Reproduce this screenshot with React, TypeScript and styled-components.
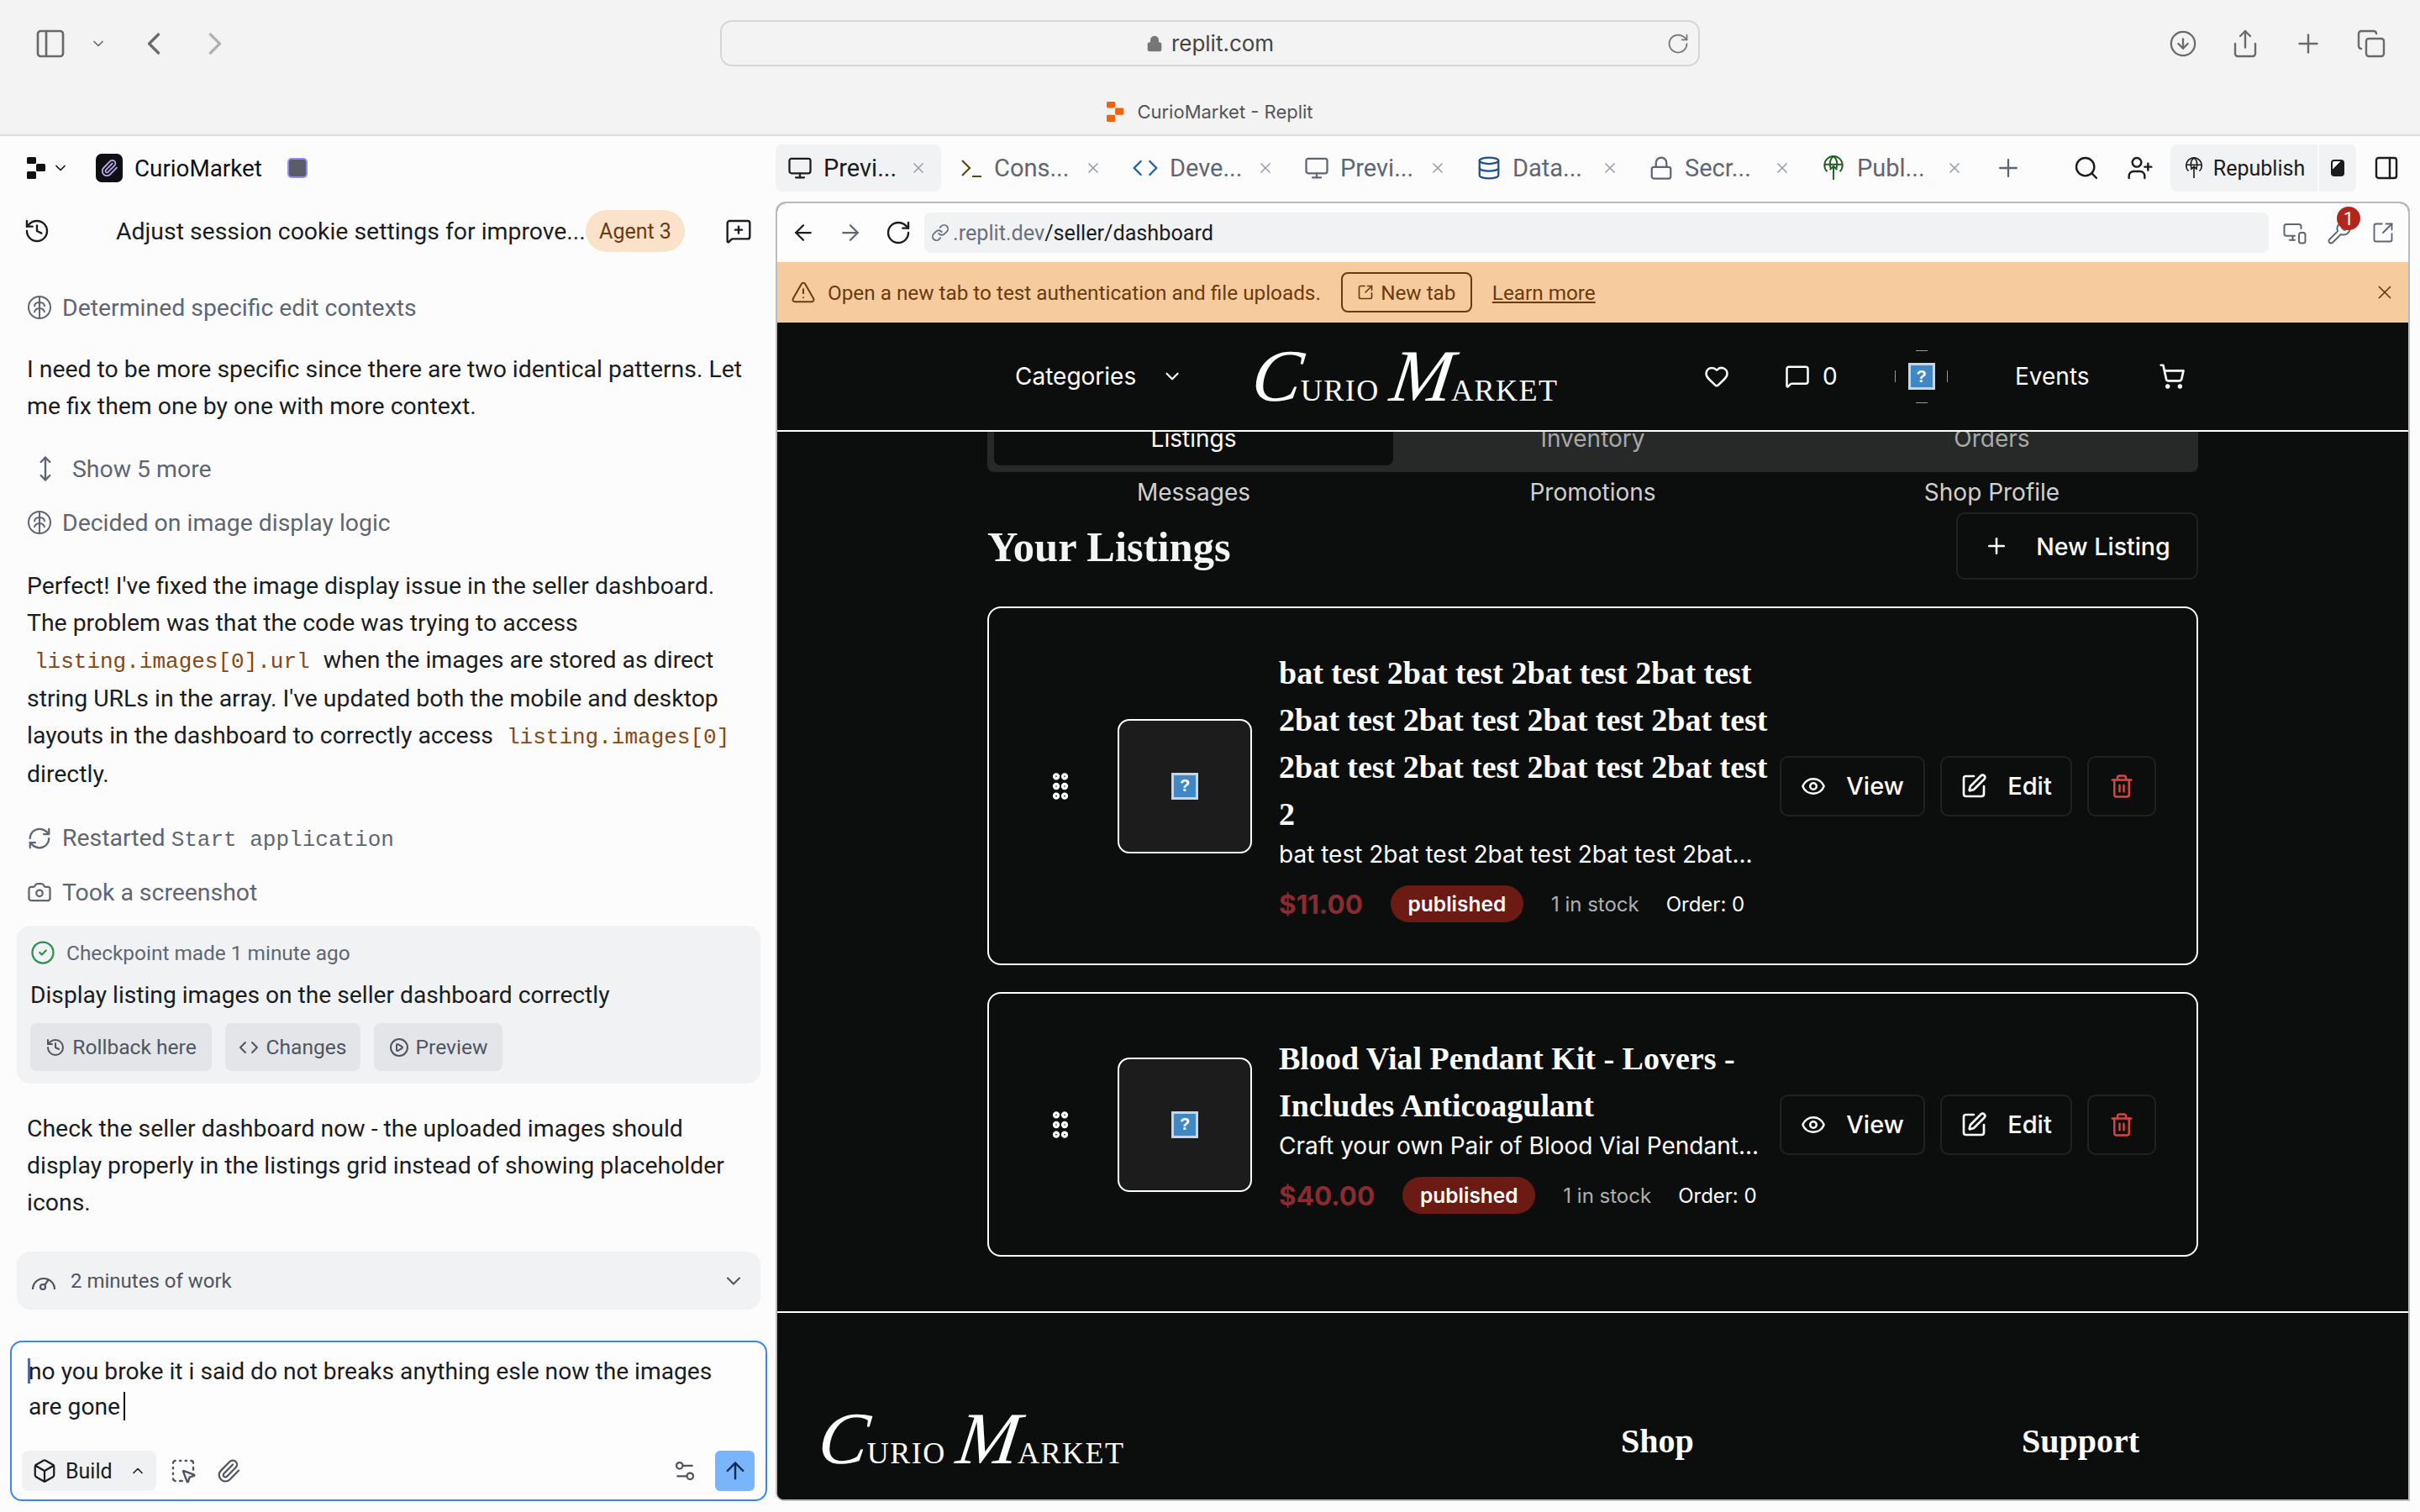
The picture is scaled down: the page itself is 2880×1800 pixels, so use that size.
import styled, { createGlobalStyle } from 'styled-components'
import {
  ArrowLeft,
  ArrowRight,
  ArrowUp,
  Box,
  Camera,
  ChevronDown,
  ChevronLeft,
  ChevronRight,
  ChevronUp,
  CircleArrowDown,
  CircleCheck,
  CirclePlay,
  Code,
  Copy,
  Database,
  Eye,
  GripVertical,
  Heart,
  History,
  Link,
  Lock,
  MessageSquare,
  MessageSquarePlus,
  Monitor,
  MonitorSmartphone,
  MoveVertical,
  PanelLeft,
  PanelRight,
  Paperclip,
  Plus,
  RefreshCw,
  RotateCw,
  Search,
  Settings2,
  Share,
  ShoppingCart,
  SquareArrowOutUpRight,
  SquareDashedMousePointer,
  SquarePen,
  Trash2,
  TriangleAlert,
  UserPlus,
  Wrench,
  X,
} from 'lucide-react'

const Global = createGlobalStyle`
  html, body { margin: 0; padding: 0; background: #fcfcfc; }
  * { box-sizing: border-box; }
  body { font-family: Roboto, "Liberation Sans", sans-serif; }
`

const Page = styled.div`
  width: 2880px;
  height: 1800px;
  overflow: hidden;
  display: flex;
  flex-direction: column;
`

/* safari chrome */
const Safari = styled.div`
  height: 162px;
  background: #f3f3f3;
  border-bottom: 2px solid #dcdcdc;
  display: flex;
  flex-direction: column;
`
const SafariTop = styled.div`
  height: 106px;
  padding: 24px 40px 0 40px;
  display: flex;
  align-items: flex-start;
  color: #6a6a6a;
`
const SafariLeft = styled.div`
  width: 817px;
  height: 55px;
  display: flex;
  align-items: center;
  gap: 14px;
`
const SafariChevron = styled(ChevronDown)`
  margin-left: 13px;
`
const SafariBack = styled(ChevronLeft)`
  margin-left: 20px;
`
const SafariForward = styled(ChevronRight)`
  margin-left: 15px;
  color: #b0b0b0;
`
const AddressBar = styled.div`
  width: 1166px;
  height: 55px;
  border: 2px solid #d6d6d6;
  border-radius: 14px;
  display: flex;
  align-items: center;
  justify-content: center;
  gap: 10px;
  position: relative;
  font-family: Inter, sans-serif;
  font-size: 26px;
  color: #444;

  svg:last-child {
    position: absolute;
    right: 10px;
    top: 12px;
    color: #777;
  }
`
const SafariRight = styled.div`
  flex: 1;
  height: 55px;
  display: flex;
  align-items: center;
  justify-content: flex-end;
  gap: 39px;
`
const SafariTitle = styled.div`
  flex: 1;
  display: flex;
  align-items: center;
  justify-content: center;
  gap: 14px;
  font-family: Inter, sans-serif;
  font-size: 22px;
  color: #555;
`

const Main = styled.div`
  flex: 1;
  display: flex;
  background: #fcfcfc;
  min-height: 0;
`

/* agent column */
const ChatColumn = styled.div`
  width: 923px;
  flex-shrink: 0;
  display: flex;
  flex-direction: column;
  color: #1a1c20;
  font-size: 28.4px;
`
const ProjectBar = styled.div`
  height: 76px;
  padding-left: 32px;
  display: flex;
  align-items: center;
  font-size: 27.8px;
  color: #0e1014;
`
const ProjectChevron = styled(ChevronDown)`
  margin: 0 -6px 0 6px;
`
const ProjectIcon = styled.span`
  width: 32px;
  height: 34px;
  margin: 0 14px 0 38px;
  border-radius: 7px;
  background: #0e1014;
  color: #b8a8f0;
  display: flex;
  align-items: center;
  justify-content: center;
`
const StatusDot = styled.span`
  width: 24px;
  height: 24px;
  margin-left: 30px;
  border-radius: 5px;
  border: 2px solid #8f8cf5;
  background: #5a5d68;
`
const ThreadBar = styled.div`
  height: 74px;
  padding: 0 28px;
  display: flex;
  align-items: center;
`
const ThreadTitle = styled.div`
  margin-left: 78px;
  width: 559px;
  font-size: 28.4px;
  white-space: nowrap;
`
const AgentPill = styled.span`
  height: 50px;
  width: 118px;
  margin: 0 48px 0 0;
  border-radius: 25px;
  background: #fae3ca;
  color: #6b3a10;
  font-size: 25px;
  display: flex;
  align-items: center;
  justify-content: center;
`
const Step = styled.div<{ $top: number }>`
  height: 44px;
  margin-top: ${(p) => p.$top}px;
  padding-left: 32px;
  display: flex;
  align-items: center;
  gap: 12px;
  color: #5f6673;
`
const ExpandIcon = styled(MoveVertical)`
  margin: 0 4px 0 6px;
`
const Para = styled.p<{ $top: number; $bottom?: number }>`
  margin: ${(p) => p.$top}px 0 ${(p) => p.$bottom ?? 0}px;
  padding: 0 32px;
  line-height: 44px;
  white-space: nowrap;
`
const CodeText = styled.code`
  font-family: 'Liberation Mono', monospace;
  font-size: 26px;
  color: #8a4513;
  padding: 0 9px;
`
const MonoText = styled.span`
  font-family: 'Liberation Mono', monospace;
  font-size: 26px;
`
const Checkpoint = styled.div`
  margin: 18px 18px 0 20px;
  height: 188px;
  border-radius: 16px;
  background: #f1f2f4;
  padding: 14px 16px;
`
const CheckpointHead = styled.div`
  display: flex;
  align-items: center;
  gap: 13px;
  height: 36px;
  font-size: 24.4px;
  color: #5f6673;
`
const CheckpointTitle = styled.div`
  margin-top: 15px;
  height: 36px;
  line-height: 36px;
  font-size: 28.2px;
`
const CheckpointActions = styled.div`
  margin-top: 15px;
  display: flex;
  gap: 16px;
`
const CheckpointButton = styled.div<{ $width: number }>`
  width: ${(p) => p.$width}px;
  height: 57px;
  border-radius: 8px;
  background: #e4e5e8;
  color: #4f5560;
  font-size: 24.6px;
  display: flex;
  align-items: center;
  justify-content: center;
  gap: 8px;
`
const WorkBar = styled.div`
  margin: 36px 18px 0 20px;
  height: 69px;
  border-radius: 16px;
  background: #f1f2f4;
  padding: 0 18px 0 16px;
  display: flex;
  align-items: center;
  gap: 16px;
  color: #4f5560;
  font-size: 24px;

  span {
    flex: 1;
  }
`
const Composer = styled.div`
  margin: 37px 10px 0 12px;
  height: 191px;
  border: 2px solid #3c87ee;
  border-radius: 14px;
  background: #fdfdfd;
  padding: 14px 13px 10px 12px;
  display: flex;
  flex-direction: column;
`
const ComposerText = styled.div`
  flex: 1;
  padding-left: 8px;
  font-size: 28.2px;
  line-height: 42px;
  white-space: nowrap;
`
const FirstCaret = styled.span`
  display: inline-block;
  width: 3px;
  height: 30px;
  background: #2f6fe0;
  vertical-align: -5px;
  margin: 0 -2px 0 -1px;
`
const EndCaret = styled.span`
  display: inline-block;
  width: 2px;
  height: 34px;
  background: #111;
  vertical-align: -7px;
  margin-left: 4px;
`
const ComposerTools = styled.div`
  height: 48px;
  display: flex;
  align-items: center;
  color: #4f5560;
`
const BuildButton = styled.div`
  width: 160px;
  height: 48px;
  border-radius: 8px;
  background: #f0f1f3;
  color: #1a1c20;
  font-size: 25px;
  padding: 0 12px;
  display: flex;
  align-items: center;
  gap: 10px;
  margin-right: 14px;

  span {
    flex: 1;
  }
`
const ToolIcon = styled.span`
  width: 36px;
  height: 36px;
  margin-right: 18px;
  display: flex;
  align-items: center;
  justify-content: center;
`
const ToolSpacer = styled.div`
  flex: 1;
`
const SendButton = styled.div`
  width: 47px;
  height: 48px;
  border-radius: 6px;
  background: #7ab4fb;
  color: #0f2a4f;
  display: flex;
  align-items: center;
  justify-content: center;
`

/* workspace column */
const WorkColumn = styled.div`
  flex: 1;
  min-width: 0;
  padding-right: 12px;
  display: flex;
  flex-direction: column;
`
const TabBar = styled.div`
  height: 76px;
  flex-shrink: 0;
  display: flex;
  align-items: center;
  margin-right: -12px;
  color: #5f6673;
  font-size: 29px;
`
const Tab = styled.div<{ $active?: boolean }>`
  width: ${(p) => (p.$active ? '197px' : '205px')};
  height: 56px;
  flex-shrink: 0;
  padding: 0 ${(p) => (p.$active ? '17px' : '22px')} 0 14px;
  margin-right: ${(p) => (p.$active ? '8px' : '0')};
  border-radius: 8px;
  background: ${(p) => (p.$active ? '#f1f2f4' : 'transparent')};
  color: ${(p) => (p.$active ? '#1a1c20' : '#5f6673')};
  display: flex;
  align-items: center;
  gap: 13px;
`
const TabLabel = styled.span`
  flex: 1;
  white-space: nowrap;
`
const TabGlobe = styled.span`
  display: flex;
  color: #1f5f1f;
`
const TabClose = styled(X)`
  color: #9a9fa8;
  flex-shrink: 0;
`
const TabTools = styled.div`
  flex: 1;
  display: flex;
  align-items: center;
  color: #1a1c20;
  padding-left: 15px;
`
const AddTab = styled(Plus)`
  margin-right: 60px;
  color: #5f6673;
`
const SearchTool = styled(Search)`
  margin-right: 32px;
`
const RepublishGroup = styled.div`
  margin-left: 20px;
  height: 56px;
  width: 221px;
  display: flex;
  border-radius: 8px;
  overflow: hidden;
  gap: 2px;
  font-size: 25px;
`
const RepublishButton = styled.div`
  flex: 1;
  background: #f1f2f4;
  display: flex;
  align-items: center;
  justify-content: center;
  gap: 10px;
`
const RepublishMenu = styled.div`
  width: 44px;
  background: #f1f2f4;
  display: flex;
  align-items: center;
  justify-content: center;
`
const StackIcon = styled.span`
  width: 16px;
  height: 20px;
  border: 2px solid #1a1c20;
  border-radius: 4px;
  background: linear-gradient(135deg, #fff 35%, #1a1c20 35%);
`
const SidePanelTool = styled(PanelRight)`
  margin-left: 20px;
`
const Frame = styled.div`
  margin-top: 2px;
  height: 1547px;
  border: 2px solid #b9bbbf;
  border-radius: 12px 12px 0 10px;
  background: #0c0e0e;
  display: flex;
  flex-direction: column;
  overflow: hidden;
`
const UrlRow = styled.div`
  height: 70px;
  flex-shrink: 0;
  background: #fdfdfd;
  padding-left: 16px;
  display: flex;
  align-items: center;
  color: #1a1c20;
`
const UrlNav = styled.div`
  width: 159px;
  display: flex;
  align-items: center;
  gap: 26px;
`
const UrlField = styled.div`
  width: 1600px;
  height: 48px;
  border-radius: 8px;
  background: #f1f2f4;
  padding-left: 8px;
  display: flex;
  align-items: center;
  gap: 4px;
  font-size: 25.2px;
  color: #6a707c;

  b {
    font-weight: 400;
    color: #1a1c20;
  }
`
const UrlTools = styled.div`
  flex: 1;
  padding-left: 16px;
  display: flex;
  align-items: center;
  gap: 23px;
  color: #5f6673;
`
const WrenchWrap = styled.span`
  position: relative;
  display: flex;
`
const CountBadge = styled.span`
  position: absolute;
  top: -16px;
  right: -10px;
  width: 28px;
  height: 28px;
  border-radius: 50%;
  background: #b3261e;
  color: #fff;
  font-size: 22px;
  display: flex;
  align-items: center;
  justify-content: center;
`
const Banner = styled.div`
  height: 72px;
  flex-shrink: 0;
  background: #f6cc9e;
  color: #6b3a10;
  font-size: 24.3px;
  padding: 0 15px 0 16px;
  display: flex;
  align-items: center;
`
const BannerText = styled.span`
  margin-left: 14px;
`
const NewTabButton = styled.span`
  margin-left: 24px;
  width: 156px;
  height: 48px;
  border: 2px solid #6b3a10;
  border-radius: 8px;
  display: flex;
  align-items: center;
  justify-content: center;
  gap: 8px;
`
const LearnMore = styled.span`
  margin-left: 24px;
  flex: 1;
  text-decoration: underline;
`
const SiteHeader = styled.div`
  height: 130px;
  flex-shrink: 0;
  border-bottom: 2px solid #fff;
  background: #0c0e0e;
  color: #fff;
  font-family: Inter, sans-serif;
  font-size: 28px;
  padding-left: 283px;
  display: flex;
  align-items: center;
  position: relative;
  z-index: 1;
`
const CategoryMenu = styled.div`
  width: 283px;
  display: flex;
  align-items: center;
  gap: 30px;
`
const Logo = styled.div`
  font-family: 'Liberation Serif', serif;
  color: #fff;
  white-space: nowrap;
  line-height: 1;
  display: flex;
  align-items: baseline;
  width: 537px;
  font-size: 36px;
  letter-spacing: 1.5px;
`
const LogoCap = styled.span`
  display: inline-block;
  font-style: italic;
  font-size: 88px;
  letter-spacing: -4px;
  margin-right: 2px;
  transform: skewX(-8deg);
`
const LogoGap = styled.span`
  width: 14px;
`
const HeaderIcons = styled.div`
  display: flex;
  align-items: center;
`
const CommentCount = styled.div`
  margin-left: 66px;
  width: 131px;
  display: flex;
  align-items: center;
  gap: 15px;
`
const AvatarRing = styled.span`
  width: 63px;
  height: 63px;
  display: flex;
  align-items: center;
  justify-content: center;
  background:
    linear-gradient(#999, #999) top center / 14px 1px no-repeat,
    linear-gradient(#999, #999) bottom center / 14px 1px no-repeat,
    linear-gradient(#999, #999) left center / 1px 14px no-repeat,
    linear-gradient(#999, #999) right center / 1px 14px no-repeat;
`
const BrokenImage = styled.span`
  width: 32px;
  height: 32px;
  border: 3px solid #c4d6e8;
  background: #3f87c5;
  color: #fff;
  font-family: 'Liberation Sans', sans-serif;
  font-size: 20px;
  font-weight: 700;
  display: flex;
  align-items: center;
  justify-content: center;
`
const EventsLink = styled.span`
  margin-left: 80px;
  margin-right: 82px;
`
const Scroller = styled.div`
  flex: 1;
  min-height: 0;
  overflow: hidden;
  background: #0c0e0e;
  color: #fff;
  font-family: Inter, sans-serif;
`
const Container = styled.div`
  width: 1441px;
  margin: 0 auto;
`
const DashTabs = styled.div`
  margin-top: -32px;
  height: 80px;
  padding: 8px;
  border-radius: 8px;
  background: #272828;
  display: grid;
  grid-template-columns: repeat(3, 1fr);
  grid-auto-rows: 64px;
  text-align: center;
  font-size: 28px;
`
const DashTab = styled.div<{ $active?: boolean; $row?: number }>`
  border-radius: 8px;
  background: ${(p) => (p.$active ? '#0c0e0e' : 'transparent')};
  color: ${(p) => (p.$active ? '#fff' : p.$row === 2 ? '#d0d0d0' : '#a8a8a8')};
  display: flex;
  align-items: center;
  justify-content: center;
`
const ListingsHead = styled.div`
  margin-top: 48px;
  height: 80px;
  display: flex;
  align-items: center;
  justify-content: space-between;
`
const ListingsTitle = styled.h2`
  margin: 2px 0 0;
  font-family: 'Liberation Serif', serif;
  font-weight: 700;
  font-size: 50.5px;
  color: #f4f4f4;
`
const NewListing = styled.div`
  width: 288px;
  height: 80px;
  border: 2px solid #1f2222;
  border-radius: 10px;
  font-size: 28.5px;
  font-weight: 500;
  display: flex;
  align-items: center;
  justify-content: center;
  gap: 32px;
`
const Card = styled.div`
  margin-top: 32px;
  border: 2px solid #fff;
  border-radius: 16px;
  padding: 49px 48px 49px 73px;
  display: flex;
  align-items: center;
`
const DragHandle = styled(GripVertical)`
  margin: 0 -8px;
  flex-shrink: 0;
`
const Thumb = styled.div`
  width: 160px;
  height: 160px;
  margin: 0 32px 0 56px;
  flex-shrink: 0;
  border: 2px solid #fff;
  border-radius: 14px;
  background: #1c1c1c;
  display: flex;
  align-items: center;
  justify-content: center;
`
const CardBody = styled.div`
  flex: 1;
  min-width: 0;
`
const CardTitle = styled.div`
  font-family: 'Liberation Serif', serif;
  font-weight: 700;
  font-size: 38px;
  line-height: 56px;
  white-space: nowrap;
`
const CardSub = styled.div`
  font-size: 28px;
  line-height: 40px;
  white-space: nowrap;
`
const MetaRow = styled.div`
  margin-top: 17px;
  height: 44px;
  display: flex;
  align-items: center;
  font-size: 24px;
  white-space: nowrap;
`
const Price = styled.span`
  font-size: 31.5px;
  font-weight: 700;
  color: #8b2a2f;
`
const StatusBadge = styled.span`
  margin: 0 33px;
  width: 158px;
  height: 44px;
  border-radius: 22px;
  background: #6b1a14;
  font-size: 24.5px;
  font-weight: 600;
  display: flex;
  align-items: center;
  justify-content: center;
`
const Stock = styled.span`
  color: #b0b0b0;
  margin-right: 32px;
`
const Actions = styled.div`
  margin-left: 12px;
  display: flex;
  gap: 18px;
`
const ActionButton = styled.div<{ $width: number }>`
  width: ${(p) => p.$width}px;
  height: 72px;
  border: 2px solid #1f2222;
  border-radius: 10px;
  font-size: 29px;
  font-weight: 500;
  display: flex;
  align-items: center;
  justify-content: center;
  gap: 24px;
`
const Footer = styled.div`
  margin-top: 65px;
  border-top: 2px solid #fff;
  padding: 106px 0 0 50px;
  display: grid;
  grid-template-columns: repeat(4, 477px);
  align-items: center;
`
const FooterLogo = styled(Logo)`
  grid-column: span 2;
`
const FooterHead = styled.div`
  font-family: 'Liberation Serif', serif;
  font-weight: 700;
  font-size: 40px;
  padding-top: 4px;
`

const BrainMark = () => (
  <svg width="30" height="30" viewBox="0 0 30 30" fill="none" stroke="currentColor" strokeWidth="2">
    <circle cx="15" cy="15" r="13" />
    <path d="M15 2v26M15 9c-4 0-6 2-6 5M15 16c-3 0-6 2-6 5M15 9c4 0 6 2 6 5M15 16c3 0 6 2 6 5" />
  </svg>
)

const ReplitMark = ({ color = 'currentColor', size = 24 }: { color?: string; size?: number }) => (
  <svg width={size} height={size + 2} viewBox="0 0 24 26" fill={color}>
    <rect x="0" y="0" width="11" height="8" rx="1.5" />
    <rect x="11" y="8" width="11" height="9" rx="1.5" />
    <rect x="0" y="17" width="11" height="9" rx="1.5" />
  </svg>
)

const PublishGlobe = ({ size = 30 }: { size?: number }) => (
  <svg width={size} height={size} viewBox="0 0 24 28" fill="none" stroke="currentColor" strokeWidth="1.8">
    <path d="M5 18a10 10 0 1 1 14 0" />
    <path d="M2 10h20M12 1c-4 3-5 8-3 14M12 1c4 3 5 8 3 14M12 27V12M8 16l4-4 4 4" />
  </svg>
)

const PromptIcon = () => (
  <svg width="28" height="30" viewBox="0 0 28 30" fill="none" stroke="#5a4a10" strokeWidth="2.2">
    <path d="M3 6l9 9-9 9M15 25h11" />
  </svg>
)

const CurioLogo = () => (
  <>
    <LogoCap>C</LogoCap>URIO
    <LogoGap />
    <LogoCap>M</LogoCap>ARKET
  </>
)

const CardActions = () => (
  <Actions>
    <ActionButton $width={173}>
      <Eye size={30} strokeWidth={2} />
      View
    </ActionButton>
    <ActionButton $width={157}>
      <SquarePen size={32} strokeWidth={2} />
      Edit
    </ActionButton>
    <ActionButton $width={82}>
      <Trash2 size={30} strokeWidth={2} color="#d9443f" />
    </ActionButton>
  </Actions>
)

const App = () => {
  return (
    <Page>
      <Global />
      <Safari>
        <SafariTop>
          <SafariLeft>
            <PanelLeft size={40} strokeWidth={1.6} />
            <SafariChevron size={20} />
            <SafariBack size={44} strokeWidth={1.8} />
            <SafariForward size={44} strokeWidth={1.8} />
          </SafariLeft>
          <AddressBar>
            <Lock size={20} fill="#777" color="#777" />
            replit.com
            <RotateCw size={28} strokeWidth={1.5} />
          </AddressBar>
          <SafariRight>
            <CircleArrowDown size={34} strokeWidth={1.6} />
            <Share size={36} strokeWidth={1.6} />
            <Plus size={36} strokeWidth={1.6} />
            <Copy size={36} strokeWidth={1.6} />
          </SafariRight>
        </SafariTop>
        <SafariTitle>
          <ReplitMark color="#f26207" size={22} />
          CurioMarket - Replit
        </SafariTitle>
      </Safari>
      <Main>
        <ChatColumn>
          <ProjectBar>
            <ReplitMark />
            <ProjectChevron size={20} />
            <ProjectIcon>
              <Paperclip size={22} />
            </ProjectIcon>
            CurioMarket
            <StatusDot />
          </ProjectBar>
          <ThreadBar>
            <History size={32} strokeWidth={1.8} />
            <ThreadTitle>Adjust session cookie settings for improve...</ThreadTitle>
            <AgentPill>Agent 3</AgentPill>
            <MessageSquarePlus size={32} strokeWidth={1.8} />
          </ThreadBar>
          <Step $top={32}>
            <BrainMark />
            Determined specific edit contexts
          </Step>
          <Para $top={30}>
            I need to be more specific since there are two identical patterns. Let
            <br />
            me fix them one by one with more context.
          </Para>
          <Step $top={30}>
            <ExpandIcon size={32} strokeWidth={1.8} />
            Show 5 more
          </Step>
          <Step $top={20}>
            <BrainMark />
            Decided on image display logic
          </Step>
          <Para $top={32} $bottom={2}>
            Perfect! I've fixed the image display issue in the seller dashboard.
            <br />
            The problem was that the code was trying to access
            <br />
            <CodeText>listing.images[0].url</CodeText> when the images are stored as direct
            <br />
            string URLs in the array. I've updated both the mobile and desktop
            <br />
            layouts in the dashboard to correctly access <CodeText>listing.images[0]</CodeText>
            <br />
            directly.
          </Para>
          <Step $top={30}>
            <RefreshCw size={30} strokeWidth={1.8} />
            <span>
              Restarted <MonoText>Start application</MonoText>
            </span>
          </Step>
          <Step $top={20}>
            <Camera size={30} strokeWidth={1.8} />
            Took a screenshot
          </Step>
          <Checkpoint>
            <CheckpointHead>
              <CircleCheck size={30} color="#2f8f4e" strokeWidth={1.8} />
              Checkpoint made 1 minute ago
            </CheckpointHead>
            <CheckpointTitle>Display listing images on the seller dashboard correctly</CheckpointTitle>
            <CheckpointActions>
              <CheckpointButton $width={216}>
                <History size={24} />
                Rollback here
              </CheckpointButton>
              <CheckpointButton $width={161}>
                <Code size={24} />
                Changes
              </CheckpointButton>
              <CheckpointButton $width={153}>
                <CirclePlay size={24} />
                Preview
              </CheckpointButton>
            </CheckpointActions>
          </Checkpoint>
          <Para $top={32}>
            Check the seller dashboard now - the uploaded images should
            <br />
            display properly in the listings grid instead of showing placeholder
            <br />
            icons.
          </Para>
          <WorkBar>
            <svg width="32" height="26" viewBox="0 0 32 26" fill="none" stroke="currentColor" strokeWidth="2.2">
              <path d="M3 23a13 13 0 0 1 26 0" />
              <circle cx="15" cy="20" r="3" />
              <path d="M17 18l5-7" />
            </svg>
            <span>2 minutes of work</span>
            <ChevronDown size={28} strokeWidth={1.8} />
          </WorkBar>
          <Composer>
            <ComposerText>
              <FirstCaret />
              no you broke it i said do not breaks anything esle now the images
              <br />
              are gone
              <EndCaret />
            </ComposerText>
            <ComposerTools>
              <BuildButton>
                <Box size={30} strokeWidth={1.8} />
                <span>Build</span>
                <ChevronUp size={20} />
              </BuildButton>
              <ToolIcon>
                <SquareDashedMousePointer size={32} strokeWidth={1.8} />
              </ToolIcon>
              <ToolIcon>
                <Paperclip size={30} strokeWidth={1.8} />
              </ToolIcon>
              <ToolSpacer />
              <ToolIcon>
                <Settings2 size={30} strokeWidth={1.8} />
              </ToolIcon>
              <SendButton>
                <ArrowUp size={32} strokeWidth={1.8} />
              </SendButton>
            </ComposerTools>
          </Composer>
        </ChatColumn>
        <WorkColumn>
          <TabBar>
            <Tab $active>
              <Monitor size={30} strokeWidth={1.8} color="#1a1c20" />
              <TabLabel>Previ...</TabLabel>
              <TabClose size={20} />
            </Tab>
            <Tab>
              <PromptIcon />
              <TabLabel>Cons...</TabLabel>
              <TabClose size={20} />
            </Tab>
            <Tab>
              <Code size={32} strokeWidth={1.8} color="#1d5fb8" />
              <TabLabel>Deve...</TabLabel>
              <TabClose size={20} />
            </Tab>
            <Tab>
              <Monitor size={30} strokeWidth={1.8} />
              <TabLabel>Previ...</TabLabel>
              <TabClose size={20} />
            </Tab>
            <Tab>
              <Database size={30} strokeWidth={1.8} color="#1d4f91" />
              <TabLabel>Data...</TabLabel>
              <TabClose size={20} />
            </Tab>
            <Tab>
              <Lock size={30} strokeWidth={1.8} />
              <TabLabel>Secr...</TabLabel>
              <TabClose size={20} />
            </Tab>
            <Tab>
              <TabGlobe>
                <PublishGlobe />
              </TabGlobe>
              <TabLabel>Publ...</TabLabel>
              <TabClose size={20} />
            </Tab>
            <TabTools>
              <AddTab size={34} strokeWidth={1.6} />
              <SearchTool size={32} strokeWidth={1.8} />
              <UserPlus size={32} strokeWidth={1.8} />
              <RepublishGroup>
                <RepublishButton>
                  <PublishGlobe size={26} />
                  Republish
                </RepublishButton>
                <RepublishMenu>
                  <StackIcon />
                </RepublishMenu>
              </RepublishGroup>
              <SidePanelTool size={32} strokeWidth={1.8} />
            </TabTools>
          </TabBar>
          <Frame>
            <UrlRow>
              <UrlNav>
                <ArrowLeft size={30} strokeWidth={1.8} />
                <ArrowRight size={30} strokeWidth={1.8} color="#5f6673" />
                <RotateCw size={32} strokeWidth={1.8} />
              </UrlNav>
              <UrlField>
                <Link size={22} />
                <span>
                  .replit.dev<b>/seller/dashboard</b>
                </span>
              </UrlField>
              <UrlTools>
                <MonitorSmartphone size={30} strokeWidth={1.6} />
                <WrenchWrap>
                  <Wrench size={30} strokeWidth={1.6} />
                  <CountBadge>1</CountBadge>
                </WrenchWrap>
                <SquareArrowOutUpRight size={28} strokeWidth={1.6} />
              </UrlTools>
            </UrlRow>
            <Banner>
              <TriangleAlert size={30} strokeWidth={1.6} />
              <BannerText>Open a new tab to test authentication and file uploads.</BannerText>
              <NewTabButton>
                <SquareArrowOutUpRight size={20} />
                New tab
              </NewTabButton>
              <LearnMore>Learn more</LearnMore>
              <X size={26} strokeWidth={1.6} />
            </Banner>
            <SiteHeader>
              <CategoryMenu>
                Categories
                <ChevronDown size={26} />
              </CategoryMenu>
              <Logo>
                <CurioLogo />
              </Logo>
              <HeaderIcons>
                <Heart size={30} strokeWidth={2} />
                <CommentCount>
                  <MessageSquare size={30} strokeWidth={2} />0
                </CommentCount>
                <AvatarRing>
                  <BrokenImage>?</BrokenImage>
                </AvatarRing>
                <EventsLink>Events</EventsLink>
                <ShoppingCart size={32} strokeWidth={2} />
              </HeaderIcons>
            </SiteHeader>
            <Scroller>
              <Container>
                <DashTabs>
                  <DashTab $active>Listings</DashTab>
                  <DashTab>Inventory</DashTab>
                  <DashTab>Orders</DashTab>
                  <DashTab $row={2}>Messages</DashTab>
                  <DashTab $row={2}>Promotions</DashTab>
                  <DashTab $row={2}>Shop Profile</DashTab>
                </DashTabs>
                <ListingsHead>
                  <ListingsTitle>Your Listings</ListingsTitle>
                  <NewListing>
                    <Plus size={30} strokeWidth={2} />
                    New Listing
                  </NewListing>
                </ListingsHead>
                <Card>
                  <DragHandle size={40} strokeWidth={3} />
                  <Thumb>
                    <BrokenImage>?</BrokenImage>
                  </Thumb>
                  <CardBody>
                    <CardTitle>
                      bat test 2bat test 2bat test 2bat test
                      <br />
                      2bat test 2bat test 2bat test 2bat test
                      <br />
                      2bat test 2bat test 2bat test 2bat test
                      <br />2
                    </CardTitle>
                    <CardSub>bat test 2bat test 2bat test 2bat test 2bat...</CardSub>
                    <MetaRow>
                      <Price>$11.00</Price>
                      <StatusBadge>published</StatusBadge>
                      <Stock>1 in stock</Stock>
                      Order: 0
                    </MetaRow>
                  </CardBody>
                  <CardActions />
                </Card>
                <Card>
                  <DragHandle size={40} strokeWidth={3} />
                  <Thumb>
                    <BrokenImage>?</BrokenImage>
                  </Thumb>
                  <CardBody>
                    <CardTitle>
                      Blood Vial Pendant Kit - Lovers -
                      <br />
                      Includes Anticoagulant
                    </CardTitle>
                    <CardSub>Craft your own Pair of Blood Vial Pendant...</CardSub>
                    <MetaRow>
                      <Price>$40.00</Price>
                      <StatusBadge>published</StatusBadge>
                      <Stock>1 in stock</Stock>
                      Order: 0
                    </MetaRow>
                  </CardBody>
                  <CardActions />
                </Card>
              </Container>
              <Footer>
                <FooterLogo>
                  <CurioLogo />
                </FooterLogo>
                <FooterHead>Shop</FooterHead>
                <FooterHead>Support</FooterHead>
              </Footer>
            </Scroller>
          </Frame>
        </WorkColumn>
      </Main>
    </Page>
  )
}

export default App
